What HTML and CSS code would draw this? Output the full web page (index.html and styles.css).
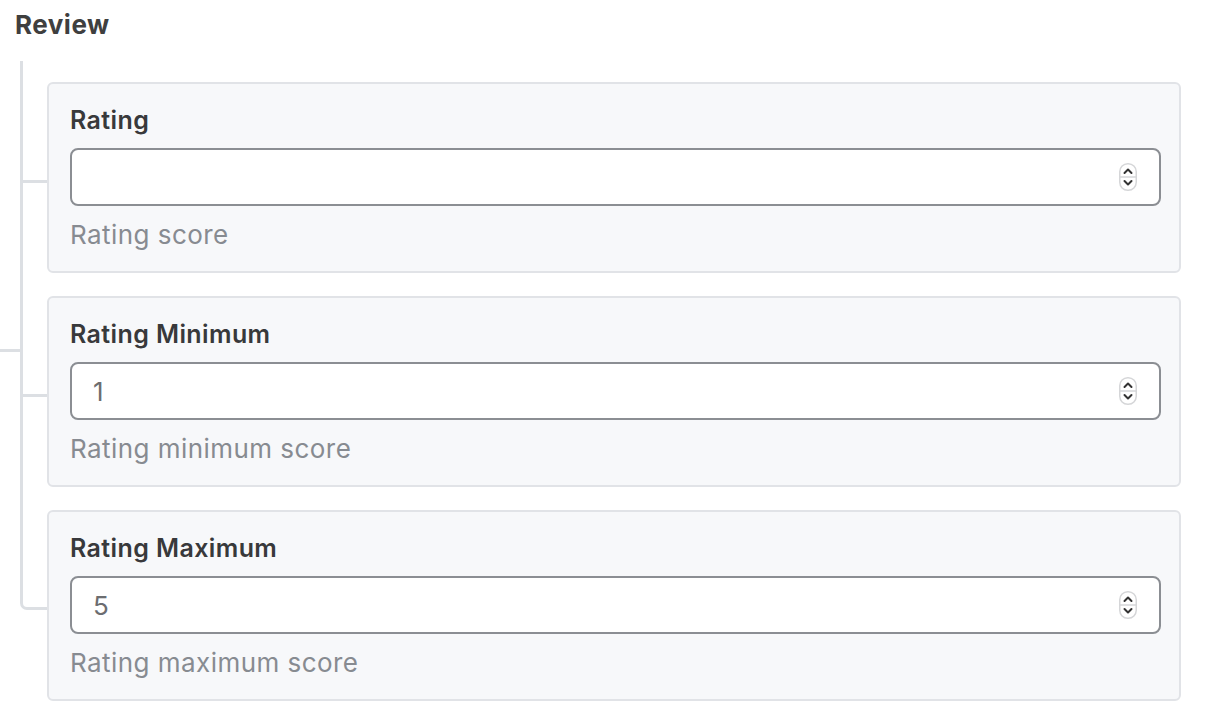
FILE: index.html
```html
<!DOCTYPE html>
<html lang="en">
<head>
<meta charset="utf-8">
<title>Review</title>
<link rel="stylesheet" href="styles.css">
</head>
<body>
<div class="page">
  <h2 class="heading">Review</h2>
  <div class="tree-wrap">
    <div class="gutter"><div class="gutter-line"></div></div>
    <div class="tree">
      <div class="row">
        <div class="conn"><div class="branch"></div></div>
        <div class="card">
          <label class="label">Rating</label>
          <div class="field">
            <input class="num" type="text" value="">
            <svg class="spin" width="18" height="28" viewBox="0 0 18 28"><rect x="0.75" y="0.75" width="16.5" height="26.5" rx="8" fill="#fff" stroke="#d5d6d8" stroke-width="1.5"/><line x1="1" y1="14" x2="17" y2="14" stroke="#d5d6d8" stroke-width="1.5"/><path d="M5.5 10 L9 6.5 L12.5 10" fill="none" stroke="#333" stroke-width="2" stroke-linecap="round" stroke-linejoin="round"/><path d="M5.5 18 L9 21.5 L12.5 18" fill="none" stroke="#333" stroke-width="2" stroke-linecap="round" stroke-linejoin="round"/></svg>
          </div>
          <div class="help">Rating score</div>
        </div>
      </div>
      <div class="row">
        <div class="conn"><div class="branch"></div></div>
        <div class="card">
          <label class="label">Rating Minimum</label>
          <div class="field">
            <input class="num" type="text" value="1">
            <svg class="spin" width="18" height="28" viewBox="0 0 18 28"><rect x="0.75" y="0.75" width="16.5" height="26.5" rx="8" fill="#fff" stroke="#d5d6d8" stroke-width="1.5"/><line x1="1" y1="14" x2="17" y2="14" stroke="#d5d6d8" stroke-width="1.5"/><path d="M5.5 10 L9 6.5 L12.5 10" fill="none" stroke="#333" stroke-width="2" stroke-linecap="round" stroke-linejoin="round"/><path d="M5.5 18 L9 21.5 L12.5 18" fill="none" stroke="#333" stroke-width="2" stroke-linecap="round" stroke-linejoin="round"/></svg>
          </div>
          <div class="help">Rating minimum score</div>
        </div>
      </div>
      <div class="row">
        <div class="conn last"><div class="elbow"></div></div>
        <div class="card">
          <label class="label">Rating Maximum</label>
          <div class="field">
            <input class="num" type="text" value="5">
            <svg class="spin" width="18" height="28" viewBox="0 0 18 28"><rect x="0.75" y="0.75" width="16.5" height="26.5" rx="8" fill="#fff" stroke="#d5d6d8" stroke-width="1.5"/><line x1="1" y1="14" x2="17" y2="14" stroke="#d5d6d8" stroke-width="1.5"/><path d="M5.5 10 L9 6.5 L12.5 10" fill="none" stroke="#333" stroke-width="2" stroke-linecap="round" stroke-linejoin="round"/><path d="M5.5 18 L9 21.5 L12.5 18" fill="none" stroke="#333" stroke-width="2" stroke-linecap="round" stroke-linejoin="round"/></svg>
          </div>
          <div class="help">Rating maximum score</div>
        </div>
      </div>
    </div>
  </div>
</div>
</body>
</html>
```

FILE: styles.css
```css
* { box-sizing: border-box; }

body {
  margin: 0;
  background: #ffffff;
  font-family: Inter, "Liberation Sans", sans-serif;
}

.page {
  padding: 10px 25px 0 0;
}

.heading {
  margin: 0;
  padding-left: 15px;
  font-size: 26px;
  line-height: 30px;
  font-weight: 700;
  letter-spacing: 0.5px;
  color: #3f3f3f;
}

.tree-wrap {
  display: flex;
  margin-top: 21px;
}

.gutter {
  width: 20px;
  flex: none;
}

.gutter-line {
  margin-top: 288px;
  height: 3px;
  background: #dcdfe3;
}

.tree {
  flex: 1;
  display: flex;
  flex-direction: column;
}

.row {
  display: flex;
}

.conn {
  width: 27px;
  flex: none;
  border-left: 3px solid #dcdfe3;
}

.branch {
  margin-top: 121px;
  height: 3px;
  background: #dcdfe3;
}

.row:first-child .branch {
  margin-top: 119px;
}

.conn.last {
  border-left: none;
}

.elbow {
  height: 123px;
  border-left: 3px solid #dcdfe3;
  border-bottom: 3px solid #dcdfe3;
  border-bottom-left-radius: 7px;
}

.card {
  flex: 1;
  display: flex;
  flex-direction: column;
  margin-top: 23px;
  background: #f7f8fa;
  border: 2px solid #e1e3e7;
  border-radius: 6px;
  padding: 22px 18px 21px 21px;
}

.row:first-child .card {
  margin-top: 21px;
}

.label {
  display: block;
  font-size: 25px;
  line-height: 29px;
  font-weight: 600;
  letter-spacing: 0.4px;
  color: #38393b;
  margin-bottom: 13px;
}

.field {
  height: 58px;
  flex: none;
  display: flex;
  align-items: center;
  background: #ffffff;
  border: 2px solid #8b8e93;
  border-radius: 8px;
  padding: 0 22px 0 21px;
}

.num {
  flex: 1;
  min-width: 0;
  border: none;
  outline: none;
  background: transparent;
  padding: 0;
  font-family: Inter, "Liberation Sans", sans-serif;
  font-size: 26px;
  color: #6c6d70;
}

.spin {
  flex: none;
  display: block;
}

.help {
  margin-top: 14px;
  font-size: 26px;
  line-height: 30px;
  letter-spacing: 0.45px;
  color: #878b91;
}
```
